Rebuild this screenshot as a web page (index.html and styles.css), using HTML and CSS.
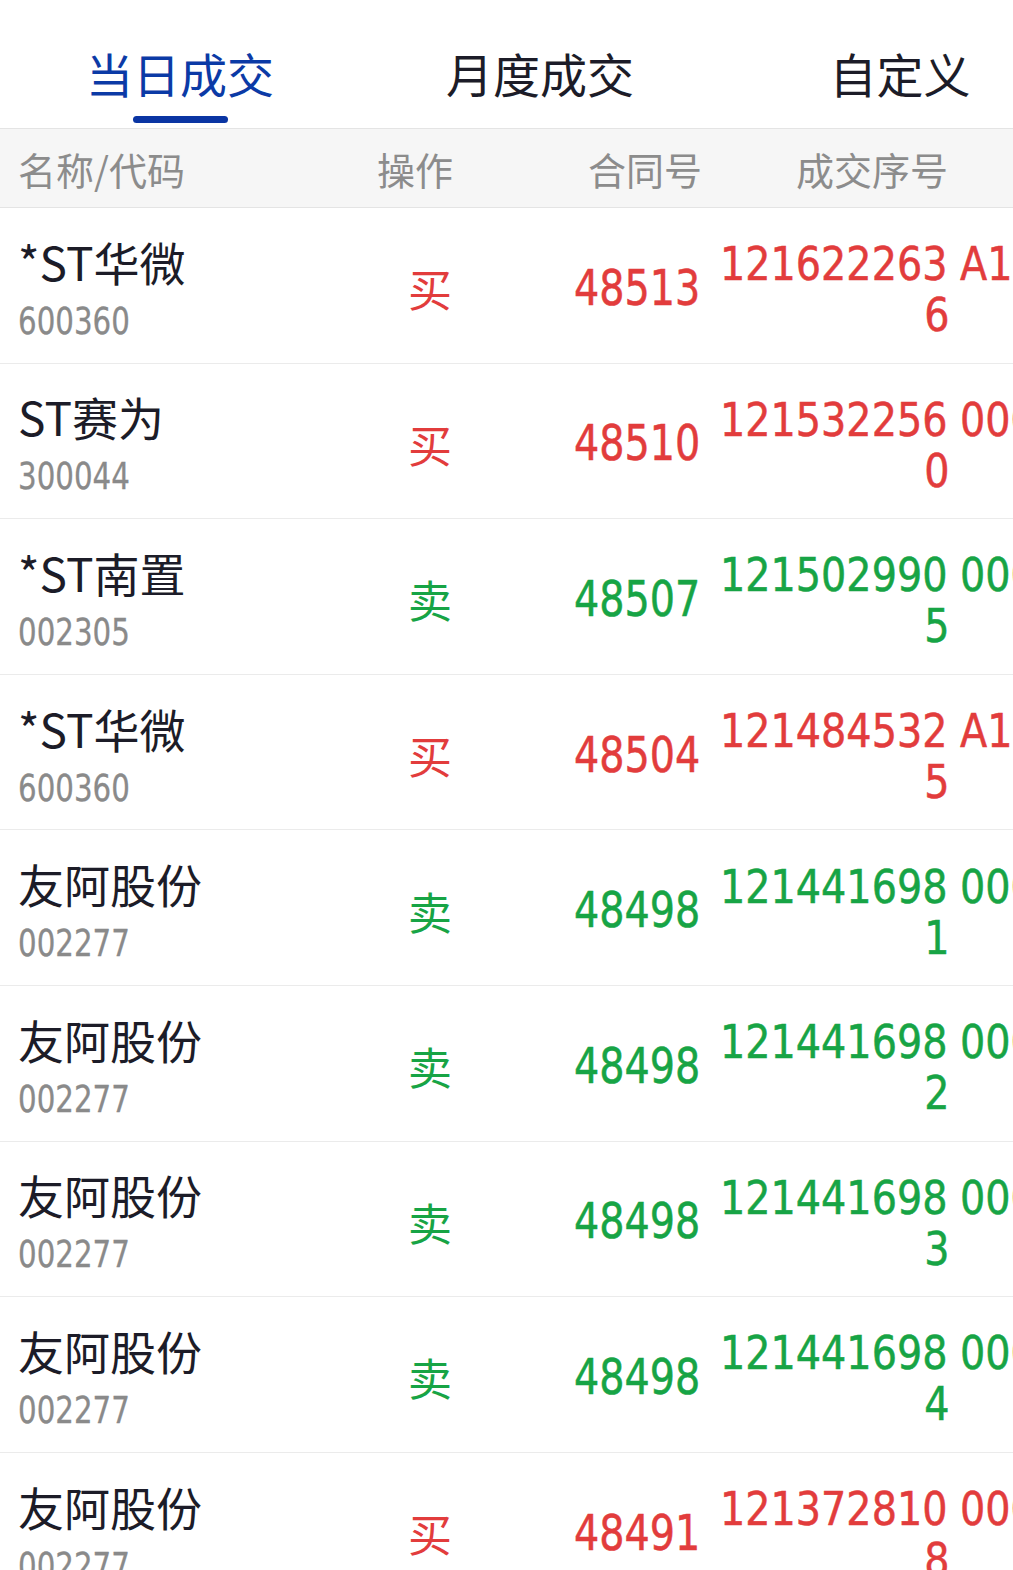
FILE: index.html
```html
<!DOCTYPE html>
<html lang="zh-CN">
<head>
  <meta charset="UTF-8" />
  <meta name="viewport" content="width=device-width, initial-scale=1" />
  <title>当日成交</title>
  <link rel="stylesheet" href="styles.css">
</head>
<body>
  <div class="tabs">
    <div class="tab active">当日成交<span class="tab-line"></span></div>
    <div class="tab">月度成交</div>
    <div class="tab">自定义</div>
  </div>

  <div class="table-head">
    <div class="col-name">名称/代码</div>
    <div class="col-op">操作</div>
    <div class="col-contract">合同号</div>
    <div class="col-serial">成交序号</div>
  </div>

  <div class="list">
    <div class="row buy">
      <div class="col-name"><div class="stock">*ST华微</div><div class="code"><span>600360</span></div></div>
      <div class="col-op">买</div>
      <div class="col-contract num"><span>48513</span></div>
      <div class="col-serial num"><div class="serial-main">121622263 A1000</div><div class="serial-tail">6</div></div>
    </div>
    <div class="row buy">
      <div class="col-name"><div class="stock">ST赛为</div><div class="code"><span>300044</span></div></div>
      <div class="col-op">买</div>
      <div class="col-contract num"><span>48510</span></div>
      <div class="col-serial num"><div class="serial-main">121532256 0000</div><div class="serial-tail">0</div></div>
    </div>
    <div class="row sell">
      <div class="col-name"><div class="stock">*ST南置</div><div class="code"><span>002305</span></div></div>
      <div class="col-op">卖</div>
      <div class="col-contract num"><span>48507</span></div>
      <div class="col-serial num"><div class="serial-main">121502990 0000</div><div class="serial-tail">5</div></div>
    </div>
    <div class="row buy">
      <div class="col-name"><div class="stock">*ST华微</div><div class="code"><span>600360</span></div></div>
      <div class="col-op">买</div>
      <div class="col-contract num"><span>48504</span></div>
      <div class="col-serial num"><div class="serial-main">121484532 A1000</div><div class="serial-tail">5</div></div>
    </div>
    <div class="row sell">
      <div class="col-name"><div class="stock">友阿股份</div><div class="code"><span>002277</span></div></div>
      <div class="col-op">卖</div>
      <div class="col-contract num"><span>48498</span></div>
      <div class="col-serial num"><div class="serial-main">121441698 0000</div><div class="serial-tail">1</div></div>
    </div>
    <div class="row sell">
      <div class="col-name"><div class="stock">友阿股份</div><div class="code"><span>002277</span></div></div>
      <div class="col-op">卖</div>
      <div class="col-contract num"><span>48498</span></div>
      <div class="col-serial num"><div class="serial-main">121441698 0000</div><div class="serial-tail">2</div></div>
    </div>
    <div class="row sell">
      <div class="col-name"><div class="stock">友阿股份</div><div class="code"><span>002277</span></div></div>
      <div class="col-op">卖</div>
      <div class="col-contract num"><span>48498</span></div>
      <div class="col-serial num"><div class="serial-main">121441698 0000</div><div class="serial-tail">3</div></div>
    </div>
    <div class="row sell">
      <div class="col-name"><div class="stock">友阿股份</div><div class="code"><span>002277</span></div></div>
      <div class="col-op">卖</div>
      <div class="col-contract num"><span>48498</span></div>
      <div class="col-serial num"><div class="serial-main">121441698 0000</div><div class="serial-tail">4</div></div>
    </div>
    <div class="row buy">
      <div class="col-name"><div class="stock">友阿股份</div><div class="code"><span>002277</span></div></div>
      <div class="col-op">买</div>
      <div class="col-contract num"><span>48491</span></div>
      <div class="col-serial num"><div class="serial-main">121372810 0000</div><div class="serial-tail">8</div></div>
    </div>
  </div>
</body>
</html>
```

FILE: styles.css
```css
body {
  margin: 0;
  background: #fff;
  font-family: "Noto Sans CJK SC", "Noto Sans", sans-serif;
  color: #1c1c28;
  overflow: hidden;
}

.tabs {
  display: flex;
  height: 128px;
}

.tab {
  position: relative;
  flex: 0 0 360px;
  text-align: center;
  font-size: 47px;
  line-height: 47px;
  padding-top: 49px;
  color: #1c1c28;
}

.tab.active {
  color: #0b3aa6;
}

.tab-line {
  position: absolute;
  left: 133px;
  top: 116px;
  width: 95px;
  height: 7px;
  border-radius: 4px;
  background: #0a35a3;
}

.table-head {
  display: flex;
  align-items: center;
  height: 78px;
  background: #f6f6f6;
  border-top: 1px solid #e4e4e4;
  border-bottom: 1px solid #e4e4e4;
  color: #8c8c8c;
  font-size: 38px;
}

.table-head > div {
  flex-shrink: 0;
}

.table-head .col-name {
  width: 342px;
  padding-left: 18px;
}

.table-head .col-op {
  width: 110px;
  text-align: center;
}

.table-head .col-contract {
  width: 232px;
  text-align: right;
}

.table-head .col-serial {
  margin-left: 20px;
  width: 300px;
  text-align: center;
}

.row {
  display: flex;
  align-items: center;
  height: 155.6px;
  box-sizing: border-box;
  border-bottom: 1px solid #ebebeb;
}

.row .col-name {
  width: 342px;
  padding-left: 18px;
  padding-top: 6px;
  flex-shrink: 0;
}

.stock {
  font-size: 46px;
  line-height: 56px;
  color: #1c1c28;
}

.code {
  font-family: "DejaVu Sans Condensed", "DejaVu Sans", sans-serif;
  font-size: 37px;
  line-height: 44px;
  color: #8a8a8a;
  margin-top: 11px;
  -webkit-text-stroke: 0.3px #8a8a8a;
}

.code span {
  display: inline-block;
  transform: scaleX(0.88);
  transform-origin: left center;
}

.row .col-op {
  width: 140px;
  flex-shrink: 0;
  text-align: center;
  font-size: 44px;
  padding-top: 6px;
}

.row .col-contract {
  width: 200px;
  flex-shrink: 0;
  text-align: right;
  padding-top: 6px;
}

.col-contract span {
  display: inline-block;
  transform: scaleX(0.9);
  transform-origin: right center;
}

.num {
  font-family: "DejaVu Sans Condensed", "DejaVu Sans", sans-serif;
  font-size: 49px;
  -webkit-text-stroke: 0.5px currentColor;
}

.row .col-serial {
  margin-left: 20px;
  width: 452px;
  flex-shrink: 0;
  font-size: 46px;
  line-height: 51px;
  padding-top: 10px;
  transform: scaleX(0.96);
  transform-origin: left center;
}

.serial-main {
  white-space: nowrap;
}

.serial-tail {
  text-align: center;
}

.buy .col-op,
.buy .num {
  color: #e23c3c;
}

.sell .col-op,
.sell .num {
  color: #17a445;
}
```
